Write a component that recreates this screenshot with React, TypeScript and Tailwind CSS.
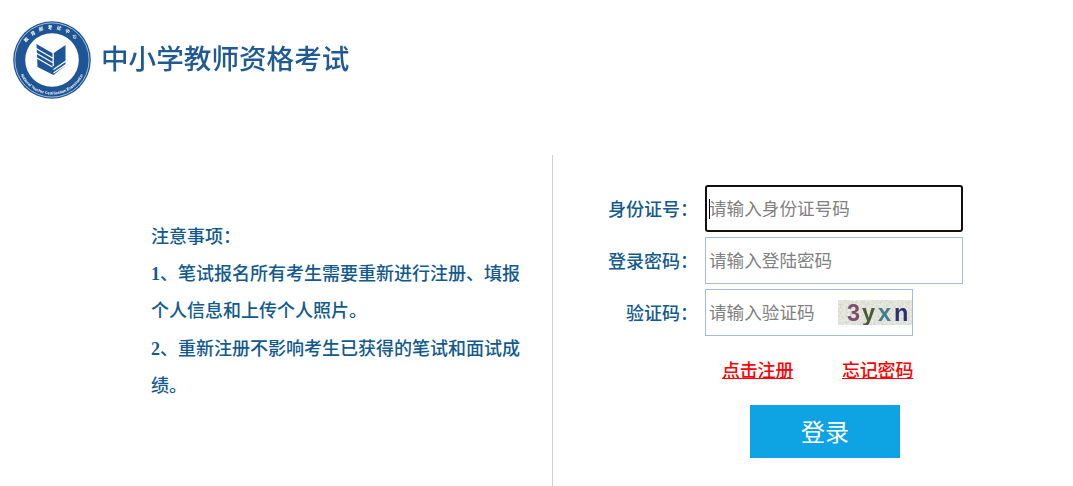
import React from "react";

function Logo() {
  return (
    <svg width="88" height="88" viewBox="0 0 88 88" className="shrink-0 blur-[0.4px]">
      <defs>
        <path id="ringTop" d="M 13 44 A 31 31 0 0 1 75 44" fill="none" />
        <path id="ringBottom" d="M 9.5 44 A 34.5 34.5 0 0 0 78.5 44" fill="none" />
      </defs>
      <circle cx="44" cy="44" r="38.8" fill="#1d5596" />
      <circle cx="44" cy="44" r="37.1" fill="none" stroke="#ffffff" strokeWidth="0.6" />
      <circle cx="44" cy="44" r="26.8" fill="#ffffff" />
      <text fontSize="4.6" fill="#ffffff" fontFamily="'Noto Sans CJK SC',sans-serif" fontWeight="700">
        <textPath href="#ringTop" startOffset="50%" textAnchor="middle" letterSpacing="4">教育部考试中心</textPath>
      </text>
      <text fontSize="3.8" fill="#ffffff" fontFamily="'Liberation Sans',sans-serif" fontWeight="700">
        <textPath href="#ringBottom" startOffset="50%" textAnchor="middle">National Teacher Certification Examination</textPath>
      </text>
      {/* open book with chevron stripes */}
      <path d="M28.5 28 L45 37.5 L57.5 29 V49.5 L45.5 59 L29.5 51 Z" fill="#1d5596" />
      <path
        d="M28 32.5 L44.5 42 M28 37 L44.5 46.5 M28 41.5 L44.5 51 M45.2 37 V50 M45.5 53.5 L58 45 M45.5 57 L58 48.5"
        fill="none"
        stroke="#ffffff"
        strokeWidth="1.3"
      />
    </svg>
  );
}

function Captcha() {
  return (
    <svg width="74" height="25" viewBox="0 0 74 25" className="shrink-0">
      <defs>
        <filter id="noise" x="0" y="0" width="100%" height="100%">
          <feTurbulence type="fractalNoise" baseFrequency="0.5" numOctaves="3" seed="7" />
          <feColorMatrix type="matrix" values="0.6 0 0 0 0.46  0 0.6 0 0 0.47  0 0 0.6 0 0.4  0 0 0 0 1" />
        </filter>
      </defs>
      <rect width="74" height="25" filter="url(#noise)" />
      <g fontFamily="'Liberation Sans',sans-serif" fontWeight="700" fontSize="23.5" style={{ filter: "blur(0.5px)" }}>
        <text x="9" y="20.5" fill="#7d4f6e">3</text>
        <text x="24" y="20.5" fill="#4a5a3c">y</text>
        <text x="40" y="20.5" fill="#3f7f8c">x</text>
        <text x="56" y="20.5" fill="#2a2f72">n</text>
      </g>
    </svg>
  );
}

function Label({ children }: { children: React.ReactNode }) {
  return (
    <label className="w-[98px] pr-[7px] text-right text-[18px] font-medium whitespace-nowrap text-[#135a8c]">
      {children}
    </label>
  );
}

export default function App() {
  return (
    <div className="h-[486px] w-[1073px] overflow-hidden bg-white font-['Liberation_Serif','Noto_Sans_CJK_SC',sans-serif]">
      <header className="flex h-[155px] items-start gap-[5.5px] pt-[16px] pl-[7.5px]">
        <Logo />
        <h1 className="mt-[21px] font-['Noto_Sans_CJK_SC',sans-serif] text-[27.6px] leading-[40px] font-medium whitespace-nowrap text-[#1f5a93] blur-[0.3px]">
          中小学教师资格考试
        </h1>
      </header>

      <main className="flex h-[331px]">
        <section className="flex w-[553px] shrink-0 flex-col border-r border-[#cfcfcf] pt-[64px] pr-[24px] pl-[151px] text-[18px] leading-[37.2px] font-medium text-[#135a8c]">
          <p>注意事项：</p>
          <p><b>1</b>、笔试报名所有考生需要重新进行注册、填报个人信息和上传个人照片。</p>
          <p><b>2</b>、重新注册不影响考生已获得的笔试和面试成绩。</p>
        </section>

        <section className="flex flex-col pt-[30px] pl-[54px] font-['Noto_Sans_CJK_SC',sans-serif]">
          <div className="flex items-center">
            <Label>身份证号：</Label>
            <div className="flex h-[47px] w-[258px] items-center rounded-[3px] border-2 border-[#101010] pl-[2px]">
              <span className="mr-[-1px] h-[20px] w-px shrink-0 bg-black" />
              <input
                className="h-full w-full pb-[2px] text-[17.6px] outline-none placeholder:text-[#808080]"
                placeholder="请输入身份证号码"
                readOnly
              />
            </div>
          </div>
          <div className="mt-[5px] flex items-center">
            <Label>登录密码：</Label>
            <input
              className="h-[47px] w-[258px] border border-[#a5bcd4] pb-[2px] pl-[3px] text-[17.6px] outline-none placeholder:text-[#808080]"
              placeholder="请输入登陆密码"
              readOnly
            />
          </div>
          <div className="mt-[5px] flex items-center">
            <Label>验证码：</Label>
            <div className="flex h-[47px] w-[208px] items-center border border-[#a5bcd4] pl-[3px]">
              <input
                className="h-full w-[129px] pb-[2px] text-[17.6px] outline-none placeholder:text-[#808080]"
                placeholder="请输入验证码"
                readOnly
              />
              <Captcha />
            </div>
          </div>
          <div className="mt-[22px] ml-[115px] flex gap-[49px] text-[18px] leading-[22px] font-medium text-[#ff0000] underline">
            <a href="#" className="w-[71px] tracking-[-0.2px] whitespace-nowrap">点击注册</a>
            <a href="#" className="w-[72px] tracking-[-0.2px] whitespace-nowrap">忘记密码</a>
          </div>
          <button className="mt-[25px] ml-[143px] h-[53px] w-[150px] bg-[#0ea3e3] pb-[2px] text-[24px] text-white">
            登录
          </button>
        </section>
      </main>
    </div>
  );
}
